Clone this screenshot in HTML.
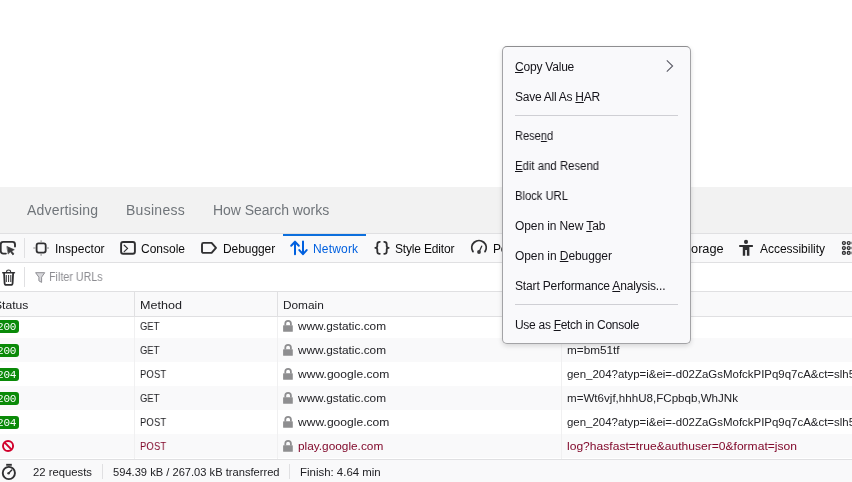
<!DOCTYPE html>
<html><head><meta charset="utf-8">
<style>
html,body{margin:0;padding:0;}
body{width:852px;height:482px;overflow:hidden;background:#fff;position:relative;font-family:"Liberation Sans","DejaVu Sans",sans-serif;font-size:12px;color:#0c0c0d;}
.abs{position:absolute;}
.t{position:absolute;white-space:nowrap;transform-origin:0 50%;will-change:transform;}
#gfoot{left:0;top:187px;width:852px;height:46px;background:#f2f2f2;}
#tb{left:0;top:233px;width:852px;height:30px;background:#f9f9fa;border-top:1px solid #e0e0e2;border-bottom:1px solid #e0e0e2;box-sizing:border-box;}
#flt{left:0;top:263px;width:852px;height:29px;background:#fff;border-bottom:1px solid #e0e0e2;box-sizing:border-box;}
#hdr{left:0;top:292px;width:852px;height:25px;background:#f9f9fa;border-bottom:1px solid #e0e0e2;box-sizing:border-box;}
.row{position:absolute;left:0;width:852px;height:24px;}
.row.odd{background:#f9f9fa;}
.st{position:absolute;left:-6px;background:#0a8a08;color:#fff;font-family:"Liberation Mono",monospace;font-size:11px;padding:0 3px;border-radius:3px;height:13px;line-height:14px;letter-spacing:-0.2px;will-change:transform;}
#sb{left:0;top:459px;width:852px;height:23px;background:#f9f9fa;border-top:1px solid #e0e0e2;box-sizing:border-box;}
.vs{position:absolute;width:1px;background:#e0e0e2;}
#menu{left:502px;top:46px;width:189px;height:298px;background:#f9f9fb;border:1px solid #a3a3a6;border-top-color:#8e8e90;border-radius:5px;box-sizing:border-box;box-shadow:0 2px 5px rgba(0,0,0,.14);}
.sep{position:absolute;left:515px;width:163px;height:1px;background:#cfcfd4;}
svg{position:absolute;overflow:visible;}
u{text-decoration:underline;text-underline-offset:1px;}
</style></head><body>
<div id="gfoot" class="abs"></div>
<div id="tb" class="abs"></div>
<div class="abs" style="left:283px;top:234px;width:83px;height:2px;background:#0c6fdd"></div>
<div id="flt" class="abs"></div>
<div id="hdr" class="abs"></div>
<div class="row" style="top:314px"></div>
<div class="row odd" style="top:338px"></div>
<div class="row" style="top:362px"></div>
<div class="row odd" style="top:386px"></div>
<div class="row" style="top:410px"></div>
<div class="row odd" style="top:434px"></div>
<div id="hdr2" class="abs" style="left:0;top:292px;width:852px;height:25px;background:#f9f9fa;border-bottom:1px solid #e0e0e2;box-sizing:border-box;"></div>
<span class="st" style="top:320px">200</span>
<span class="st" style="top:344px">200</span>
<span class="st" style="top:368px">204</span>
<span class="st" style="top:392px">200</span>
<span class="st" style="top:416px">204</span>
<div id="sb" class="abs"></div>
<!-- column separators -->
<div class="vs" style="left:134px;top:292px;height:24px"></div>
<div class="vs" style="left:277px;top:292px;height:24px"></div>
<div class="vs" style="left:561px;top:292px;height:24px"></div>
<div class="vs" style="left:134px;top:317px;height:142px;background:#f0f0f1"></div>
<div class="vs" style="left:277px;top:317px;height:142px;background:#f0f0f1"></div>
<div class="vs" style="left:561px;top:317px;height:142px;background:#f0f0f1"></div>
<div class="vs" style="left:24px;top:238px;height:20px"></div>
<div class="vs" style="left:24px;top:267px;height:20px"></div>
<div class="vs" style="left:102px;top:464px;height:15px"></div>
<div class="vs" style="left:289px;top:464px;height:15px"></div>
<svg id="icons" style="left:0;top:0" width="852" height="482" viewBox="0 0 852 482">
<g fill="none" stroke="#303032" stroke-width="1.9" stroke-linecap="round" stroke-linejoin="round">
<!-- picker -->
<path d="M5.9 253.6 H3.2 A2.5 2.5 0 0 1 0.7 251.1 V244.4 A2.5 2.5 0 0 1 3.2 241.9 H12.5 A2.5 2.5 0 0 1 15 244.4 V246.5"/>
<path d="M7.2 246.6 L14.3 249.7 L11.6 250.9 L14 254 L12.8 254.9 L10.4 251.8 L8.4 253.8 Z" fill="#3a3a3c" stroke-width="0.6"/>
<!-- inspector -->
<rect x="36.6" y="243.4" width="9.1" height="9.2" rx="2" stroke-width="1.8"/>
<path d="M41.1 240.3 V242.6 M41.1 253.4 V255.8 M33.3 248 H35.8 M46.5 248 H49" stroke="#8a8a8c" stroke-width="1" stroke-linecap="butt"/>
<!-- console -->
<rect x="121.1" y="242" width="13.8" height="11.7" rx="2"/>
<path d="M124.2 245.2 L127.6 248.4 L124.2 251.6" stroke-width="1.2"/>
<!-- debugger -->
<path d="M203.5 242.9 H211.6 L216 247.9 L211.6 252.9 H203.5 A1.5 1.5 0 0 1 202 251.4 V244.4 A1.5 1.5 0 0 1 203.5 242.9 Z"/>
<!-- style editor -->
<path d="M379.8 241.8 C377.6 241.8 377.3 242.8 377.3 244.2 V246 C377.3 247.2 376.6 247.8 375.3 247.8 C376.6 247.8 377.3 248.4 377.3 249.6 V251.4 C377.3 252.8 377.6 253.8 379.8 253.8" stroke-width="1.8"/>
<path d="M384.2 241.8 C386.4 241.8 386.7 242.8 386.7 244.2 V246 C386.7 247.2 387.4 247.8 388.7 247.8 C387.4 247.8 386.7 248.4 386.7 249.6 V251.4 C386.7 252.8 386.4 253.8 384.2 253.8" stroke-width="1.8"/>
<!-- performance -->
<path d="M472.9 251.6 A7.2 7.2 0 1 1 485.1 251.6"/>
<path d="M479 252 L481.7 246.2" stroke-width="1.3"/>
<circle cx="479" cy="252" r="1.9" fill="#3a3a3c" stroke="none"/>
<!-- grid -->
<g stroke-width="1.35">
<circle cx="843.9" cy="243" r="1.45"/><circle cx="848.7" cy="243" r="1.45"/><circle cx="853.5" cy="243" r="1.45"/>
<circle cx="843.9" cy="248" r="1.45"/><circle cx="848.7" cy="248" r="1.45"/><circle cx="853.5" cy="248" r="1.45"/>
<circle cx="843.9" cy="252.9" r="1.45"/><circle cx="848.7" cy="252.9" r="1.45"/><circle cx="853.5" cy="252.9" r="1.45"/>
</g>
<!-- trash -->
<path d="M2.8 272.7 H14.4" stroke-width="1.6"/>
<path d="M6.6 271.6 A2 1.6 0 0 1 10.6 271.6" stroke-width="1.2"/>
<path d="M4.1 273.5 L4.6 283.2 A1.8 1.8 0 0 0 6.4 284.9 H10.8 A1.8 1.8 0 0 0 12.6 283.2 L13.1 273.5" stroke-width="1.8"/>
<path d="M6.3 275 V282 M8.6 275 V282 M10.8 275 V282" stroke-width="1" stroke-linecap="butt"/>
<!-- stopwatch -->
<circle cx="8.85" cy="473" r="6.1" stroke-width="1.9"/>
<path d="M6.2 464.8 H11.8" stroke-width="1.9" stroke-linecap="butt"/>
<path d="M8.6 473.2 L11.8 469.9" stroke-width="1.4"/>
<circle cx="8.6" cy="473.2" r="1.3" fill="#3a3a3c" stroke="none"/>
</g>
<!-- network -->
<g fill="none" stroke="#0060df" stroke-width="2" stroke-linecap="round" stroke-linejoin="round">
<path d="M295 254.2 V241.8 M291.2 245.8 L295 241.8 L298.8 245.8"/>
<path d="M303 241.5 V254.2 M299.3 250.1 L303 254.2 L306.7 250.1"/>
</g>
<!-- accessibility -->
<g fill="#2e2e30" stroke="none">
<circle cx="746" cy="241.9" r="2.05"/>
<rect x="739.1" y="245.1" width="13.9" height="1.8" rx="0.6"/>
<path d="M742.8 246 H749.4 V255.7 H746.9 V250.1 H745.2 V255.7 H742.8 Z"/>
</g>
<!-- filter -->
<path d="M35.6 272.7 H44.7 L41.6 277.2 V282.4 L38.9 280.8 V277.2 Z" fill="#d7d7db" stroke="#8f8f94" stroke-width="1" stroke-linejoin="round"/>
<!-- locks -->
<g fill="#8e8e90" transform="translate(0 0)"><rect x="283.1" y="325.2" width="9.7" height="6.6" rx="0.6"/><path d="M285.3 325.6 V323.6 A2.8 2.8 0 0 1 290.9 323.6 V325.6" fill="none" stroke="#8e8e90" stroke-width="1.8"/></g>
<g fill="#8e8e90" transform="translate(0 24)"><rect x="283.1" y="325.2" width="9.7" height="6.6" rx="0.6"/><path d="M285.3 325.6 V323.6 A2.8 2.8 0 0 1 290.9 323.6 V325.6" fill="none" stroke="#8e8e90" stroke-width="1.8"/></g>
<g fill="#8e8e90" transform="translate(0 48)"><rect x="283.1" y="325.2" width="9.7" height="6.6" rx="0.6"/><path d="M285.3 325.6 V323.6 A2.8 2.8 0 0 1 290.9 323.6 V325.6" fill="none" stroke="#8e8e90" stroke-width="1.8"/></g>
<g fill="#8e8e90" transform="translate(0 72)"><rect x="283.1" y="325.2" width="9.7" height="6.6" rx="0.6"/><path d="M285.3 325.6 V323.6 A2.8 2.8 0 0 1 290.9 323.6 V325.6" fill="none" stroke="#8e8e90" stroke-width="1.8"/></g>
<g fill="#8e8e90" transform="translate(0 96)"><rect x="283.1" y="325.2" width="9.7" height="6.6" rx="0.6"/><path d="M285.3 325.6 V323.6 A2.8 2.8 0 0 1 290.9 323.6 V325.6" fill="none" stroke="#8e8e90" stroke-width="1.8"/></g>
<g fill="#8e8e90" transform="translate(0 120)"><rect x="283.1" y="325.2" width="9.7" height="6.6" rx="0.6"/><path d="M285.3 325.6 V323.6 A2.8 2.8 0 0 1 290.9 323.6 V325.6" fill="none" stroke="#8e8e90" stroke-width="1.8"/></g>
<!-- blocked -->
<g fill="none" stroke="#d1002b" stroke-width="1.9"><circle cx="8.05" cy="446" r="5.05"/><path d="M4.5 442.4 L11.6 449.6" stroke-width="2"/></g>
</svg>

<span id="f1" class="t" style="left:27.45px;top:202px;font-size:14px;line-height:16px;color:#70757a;letter-spacing:0.180px;transform:scaleX(1.0000)">Advertising</span>
<span id="f2" class="t" style="left:126.07px;top:202px;font-size:14px;line-height:16px;color:#70757a;letter-spacing:0.280px;transform:scaleX(1.0000)">Business</span>
<span id="f3" class="t" style="left:213.07px;top:202px;font-size:14px;line-height:16px;color:#70757a;letter-spacing:-0.037px;transform:scaleX(1.0000)">How Search works</span>
<span id="t1" class="t" style="left:54.60px;top:242px;font-size:12px;line-height:14px;color:#0c0c0d;letter-spacing:0.028px;transform:scaleX(1.0000)">Inspector</span>
<span id="t2" class="t" style="left:141.27px;top:242px;font-size:12px;line-height:14px;color:#0c0c0d;letter-spacing:-0.001px;transform:scaleX(1.0000)">Console</span>
<span id="t3" class="t" style="left:223.20px;top:242px;font-size:12px;line-height:14px;color:#0c0c0d;letter-spacing:-0.077px;transform:scaleX(1.0000)">Debugger</span>
<span id="t4" class="t" style="left:313.00px;top:242px;font-size:12px;line-height:14px;color:#0060df;letter-spacing:0.183px;transform:scaleX(1.0000)">Network</span>
<span id="t5" class="t" style="left:395.40px;top:242px;font-size:12px;line-height:14px;color:#0c0c0d;letter-spacing:-0.171px;transform:scaleX(1.0000)">Style Editor</span>
<span id="t6" class="t" style="left:492.80px;top:242px;font-size:12px;line-height:14px;color:#0c0c0d;letter-spacing:-0.179px;transform:scaleX(1.0000)">Performance</span>
<span id="t7" class="t" style="left:678.88px;top:242px;font-size:12px;line-height:14px;color:#0c0c0d;letter-spacing:0.000px;transform:scaleX(1.0621)">Storage</span>
<span id="t8" class="t" style="left:759.88px;top:242px;font-size:12px;line-height:14px;color:#0c0c0d;letter-spacing:-0.033px;transform:scaleX(1.0000)">Accessibility</span>
<span id="fl" class="t" style="left:48.94px;top:270px;font-size:12px;line-height:14px;color:#8c8c91;letter-spacing:0.000px;transform:scaleX(0.8935)">Filter URLs</span>
<span id="h1" class="t" style="left:-6.09px;top:299px;font-size:11px;line-height:13px;color:#222226;letter-spacing:0.000px;transform:scaleX(1.1040)">Status</span>
<span id="h2" class="t" style="left:139.68px;top:299px;font-size:11px;line-height:13px;color:#222226;letter-spacing:0.000px;transform:scaleX(1.1411)">Method</span>
<span id="h3" class="t" style="left:282.71px;top:299px;font-size:11px;line-height:13px;color:#222226;letter-spacing:0.000px;transform:scaleX(1.0741)">Domain</span>
<span id="s1" class="t" style="left:33.25px;top:466px;font-size:11px;line-height:13px;color:#222226;letter-spacing:0.000px;transform:scaleX(1.0266)">22 requests</span>
<span id="s2" class="t" style="left:113.43px;top:466px;font-size:11px;line-height:13px;color:#222226;letter-spacing:0.000px;transform:scaleX(1.0126)">594.39 kB / 267.03 kB transferred</span>
<span id="s3" class="t" style="left:299.56px;top:466px;font-size:11px;line-height:13px;color:#222226;letter-spacing:0.000px;transform:scaleX(1.0398)">Finish: 4.64 min</span>
<span id="r0m" class="t" style="left:139.60px;top:320px;font-size:11px;line-height:13px;color:#222226;letter-spacing:0.000px;transform:scaleX(0.8508)">GET</span>
<span id="r0d" class="t" style="left:298.00px;top:320px;font-size:11px;line-height:13px;color:#222226;letter-spacing:0.000px;transform:scaleX(1.0742)">www.gstatic.com</span>
<span id="r1m" class="t" style="left:139.60px;top:344px;font-size:11px;line-height:13px;color:#222226;letter-spacing:0.000px;transform:scaleX(0.8508)">GET</span>
<span id="r1d" class="t" style="left:298.00px;top:344px;font-size:11px;line-height:13px;color:#222226;letter-spacing:0.000px;transform:scaleX(1.0742)">www.gstatic.com</span>
<span id="r1u" class="t" style="left:566.80px;top:344px;font-size:11px;line-height:13px;color:#222226;letter-spacing:0.000px;transform:scaleX(1.0682)">m=bm51tf</span>
<span id="r2m" class="t" style="left:139.60px;top:368px;font-size:11px;line-height:13px;color:#222226;letter-spacing:0.000px;transform:scaleX(0.8732)">POST</span>
<span id="r2d" class="t" style="left:298.00px;top:368px;font-size:11px;line-height:13px;color:#222226;letter-spacing:0.000px;transform:scaleX(1.0988)">www.google.com</span>
<span id="r2u" class="t" style="left:566.80px;top:368px;font-size:11px;line-height:13px;color:#222226;letter-spacing:0.000px;transform:scaleX(1.0410)">gen_204?atyp=i&amp;ei=-d02ZaGsMofckPIPq9q7cA&amp;ct=slh5</span>
<span id="r3m" class="t" style="left:139.60px;top:392px;font-size:11px;line-height:13px;color:#222226;letter-spacing:0.000px;transform:scaleX(0.8508)">GET</span>
<span id="r3d" class="t" style="left:298.00px;top:392px;font-size:11px;line-height:13px;color:#222226;letter-spacing:0.000px;transform:scaleX(1.0742)">www.gstatic.com</span>
<span id="r3u" class="t" style="left:566.80px;top:392px;font-size:11px;line-height:13px;color:#222226;letter-spacing:0.000px;transform:scaleX(1.0537)">m=Wt6vjf,hhhU8,FCpbqb,WhJNk</span>
<span id="r4m" class="t" style="left:139.60px;top:416px;font-size:11px;line-height:13px;color:#222226;letter-spacing:0.000px;transform:scaleX(0.8732)">POST</span>
<span id="r4d" class="t" style="left:298.00px;top:416px;font-size:11px;line-height:13px;color:#222226;letter-spacing:0.000px;transform:scaleX(1.0988)">www.google.com</span>
<span id="r4u" class="t" style="left:566.80px;top:416px;font-size:11px;line-height:13px;color:#222226;letter-spacing:0.000px;transform:scaleX(1.0410)">gen_204?atyp=i&amp;ei=-d02ZaGsMofckPIPq9q7cA&amp;ct=slh5</span>
<span id="r5m" class="t" style="left:139.60px;top:440px;font-size:11px;line-height:13px;color:#820a2c;letter-spacing:0.000px;transform:scaleX(0.8732)">POST</span>
<span id="r5d" class="t" style="left:298.00px;top:440px;font-size:11px;line-height:13px;color:#820a2c;letter-spacing:0.000px;transform:scaleX(1.0751)">play.google.com</span>
<span id="r5u" class="t" style="left:566.80px;top:440px;font-size:11px;line-height:13px;color:#820a2c;letter-spacing:0.000px;transform:scaleX(1.0980)">log?hasfast=true&amp;authuser=0&amp;format=json</span>
<div id="menu" class="abs"></div>
<div class="sep" style="top:115px"></div>
<div class="sep" style="top:304px"></div>
<svg style="left:664px;top:58px" width="12" height="16" viewBox="0 0 12 16"><path d="M2.8 2.4 L8.6 8 L2.8 13.6" fill="none" stroke="#5b5b66" stroke-width="1.1"/></svg>
<span id="m1" class="t" style="left:514.60px;top:60px;font-size:12px;line-height:14px;color:#15141a;letter-spacing:-0.211px;transform:scaleX(1.0000)"><u>C</u>opy Value</span>
<span id="m2" class="t" style="left:514.60px;top:90px;font-size:12px;line-height:14px;color:#15141a;letter-spacing:-0.252px;transform:scaleX(1.0000)">Save All As <u>H</u>AR</span>
<span id="m3" class="t" style="left:514.60px;top:129px;font-size:12px;line-height:14px;color:#15141a;letter-spacing:0.000px;transform:scaleX(0.9212)">Rese<u>n</u>d</span>
<span id="m4" class="t" style="left:514.60px;top:159px;font-size:12px;line-height:14px;color:#15141a;letter-spacing:0.000px;transform:scaleX(0.9473)"><u>E</u>dit and Resend</span>
<span id="m5" class="t" style="left:514.60px;top:189px;font-size:12px;line-height:14px;color:#15141a;letter-spacing:0.000px;transform:scaleX(0.9340)">Block URL</span>
<span id="m6" class="t" style="left:514.60px;top:219px;font-size:12px;line-height:14px;color:#15141a;letter-spacing:-0.101px;transform:scaleX(1.0000)">Open in New <u>T</u>ab</span>
<span id="m7" class="t" style="left:514.60px;top:249px;font-size:12px;line-height:14px;color:#15141a;letter-spacing:-0.074px;transform:scaleX(1.0000)">Open in <u>D</u>ebugger</span>
<span id="m8" class="t" style="left:514.60px;top:279px;font-size:12px;line-height:14px;color:#15141a;letter-spacing:-0.151px;transform:scaleX(1.0000)">Start Performance <u>A</u>nalysis...</span>
<span id="m9" class="t" style="left:514.60px;top:318px;font-size:12px;line-height:14px;color:#15141a;letter-spacing:-0.292px;transform:scaleX(1.0000)">Use as <u>F</u>etch in Console</span>
</body></html>
